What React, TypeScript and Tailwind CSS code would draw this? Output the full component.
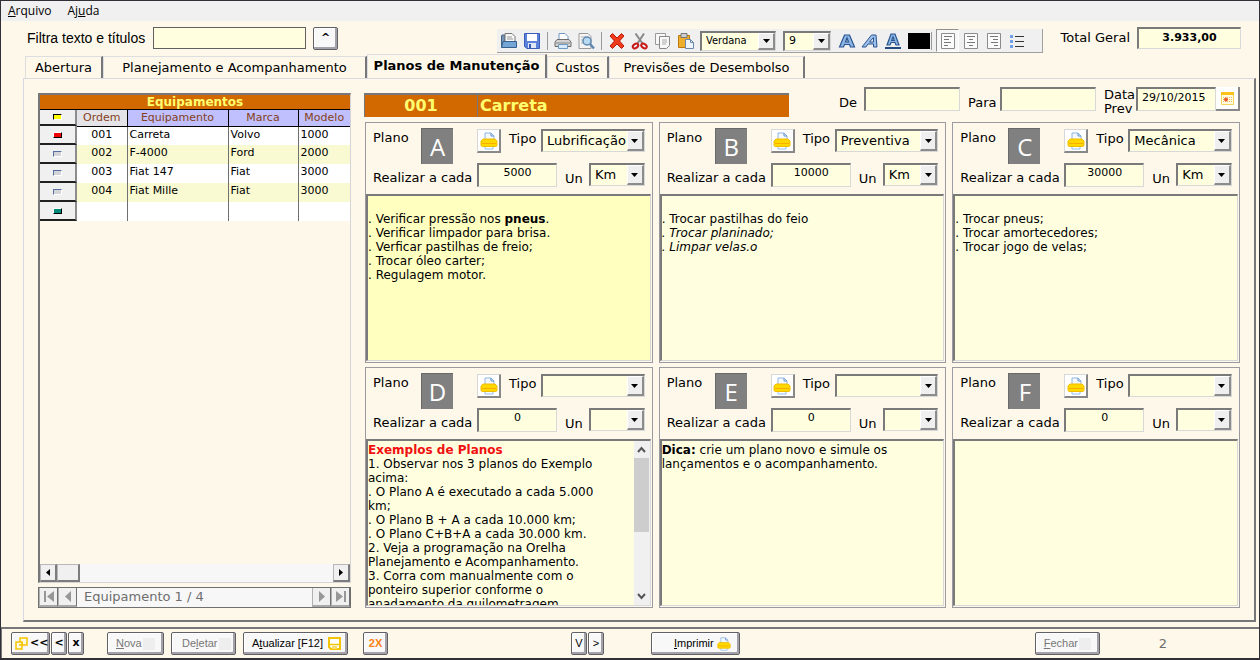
import { useState } from 'react';
import type { ReactNode } from 'react';

const SUNKEN = 'border-t-2 border-l-2 border-r border-b border-t-[#7a7a7a] border-l-[#7a7a7a] border-r-[#d8d8d8] border-b-[#d8d8d8] rounded-none';
const RAISED = 'border-t border-l border-r-2 border-b-2 border-t-[#b8b8b8] border-l-[#b8b8b8] border-r-[#7c7c7c] border-b-[#7c7c7c] rounded-none';
const COMMAND = 'h-[23px] shrink-0 flex items-center border border-[#606066] rounded-xs bg-[#f8f8f8] shadow-[inset_-2px_-2px_0_#a2a2a8,inset_1px_1px_0_#ffffff] text-[11px]';

const equipments = [
  { order: '001', name: 'Carreta', brand: 'Volvo', model: '1000' },
  { order: '002', name: 'F-4000', brand: 'Ford', model: '2000' },
  { order: '003', name: 'Fiat 147', brand: 'Fiat', model: '3000' },
  { order: '004', name: 'Fiat Mille', brand: 'Fiat', model: '3000' },
];

const tabs = [
  { label: 'Abertura', width: 'w-[78px]' },
  { label: 'Planejamento e Acompanhamento', width: 'w-[264px]' },
  { label: 'Planos de Manutenção', width: 'w-[180px]' },
  { label: 'Custos', width: 'w-[62px]' },
  { label: 'Previsões de Desembolso', width: 'w-[196px]' },
];

type Plan = {
  letter: string;
  type: string;
  every: string;
  unit: string;
  background: string;
  scroll?: boolean;
  body: ReactNode;
};

const plans: Plan[] = [
  {
    letter: 'A', type: 'Lubrificação', every: '5000', unit: 'Km', background: 'bg-[#ffffc0]',
    body: <><br />. Verificar pressão nos <b>pneus</b>.<br />. Verificar limpador para brisa.<br />. Verficar pastilhas de freio;<br />. Trocar óleo carter;<br />. Regulagem motor.</>,
  },
  {
    letter: 'B', type: 'Preventiva', every: '10000', unit: 'Km', background: 'bg-[#ffffe0]',
    body: <><br />. Trocar pastilhas do feio<br /><i>. Trocar planinado;<br />. Limpar velas.o</i></>,
  },
  {
    letter: 'C', type: 'Mecânica', every: '30000', unit: 'Km', background: 'bg-[#ffffe0]',
    body: <><br />. Trocar pneus;<br />. Trocar amortecedores;<br />. Trocar jogo de velas;</>,
  },
  {
    letter: 'D', type: '', every: '0', unit: '', background: 'bg-[#ffffe0]', scroll: true,
    body: <><b className="text-[#f01010]">Exemplos de Planos</b><br />1. Observar nos 3 planos do Exemplo<br />acima:<br />. O Plano A é executado a cada 5.000<br />km;<br />. O Plano B + A a cada 10.000 km;<br />. O Plano C+B+A a cada 30.000 km.<br />2. Veja a programação na Orelha<br />Planejamento e Acompanhamento.<br />3. Corra com manualmente com o<br />ponteiro superior conforme o<br />anadamento da quilometragem</>,
  },
  {
    letter: 'E', type: '', every: '0', unit: '', background: 'bg-[#ffffe0]',
    body: <><b>Dica:</b> crie um plano novo e simule os<br />lançamentos e o acompanhamento.</>,
  },
  { letter: 'F', type: '', every: '0', unit: '', background: 'bg-[#ffffe0]', body: null },
];

function Combo({ label, id, value, options, width, text }: { label?: string; id?: string; value: string; options: string[]; width: string; text: string }) {
  return (
    <div className={`${width} grid bg-[#ffffe0] ${SUNKEN}`}>
      <select
        id={id}
        aria-label={label}
        defaultValue={value}
        className={`col-start-1 row-start-1 w-full min-w-0 appearance-none bg-transparent pl-1 pr-[17px] outline-none ${text}`}
      >
        {options.map(option => <option key={option} value={option}>{option}</option>)}
      </select>
      <span className="col-start-1 row-start-1 justify-self-end w-[17px] flex items-center justify-center pointer-events-none bg-[#efefef] border-t border-l border-r-2 border-b-2 border-t-white border-l-white border-r-[#8c8c8c] border-b-[#8c8c8c]">
        <svg width="7" height="4" viewBox="0 0 7 4"><path d="M0 0h7L3.500 4z" fill="#000" /></svg>
      </span>
    </div>
  );
}

function YellowPrinter({ size }: { size: number }) {
  return (
    <svg width={size} height={size} viewBox="0 0 18 18">
      <path d="M5 8V1h6l3 3v4z" fill="#f4f9ff" stroke="#8fb4e0" />
      <path d="M11 1v3h3" fill="none" stroke="#5f92d0" />
      <path d="M5 13h8v4H5z" fill="#fff" stroke="#8fc0ee" />
      <path d="M3 7h12l2 2v4q0 1.500-1.500 1.500h-13Q1 14.500 1 13V9z" fill="#ffd800" stroke="#f0bc00" />
      <path d="M2 11.500h14" stroke="#f7ae00" />
    </svg>
  );
}

function YellowFloppy() {
  return (
    <svg width="13" height="13" viewBox="0 0 13 13">
      <path d="M1 1h11v11H3L1 10z" fill="#fff" stroke="#f5c400" strokeWidth="2" />
      <path d="M2 7.500h9" stroke="#f5c400" strokeWidth="1.500" />
      <path d="M4 9h5v3H4z" fill="#f7dc70" />
    </svg>
  );
}

function ToolIcon({ name }: { name: string }) {
  return (
    <svg width="18" height="18" viewBox="0 0 18 18" fill="none">
      {name === 'open' && (
        <>
          <path d="M1.500 15V4q0-1 1-1H5v12z" fill="#7795b7" stroke="#45627f" />
          <path d="M5 10V1.500h7l3 3V10z" fill="#f7f7f7" stroke="#777" />
          <path d="M7 5h5M7 7h6" stroke="#999" />
          <path d="M1.500 15.500L3 9.500h13.500v6z" fill="#74a5d6" stroke="#365f8c" />
        </>
      )}
      {name === 'save' && (
        <>
          <path d="M1.500 1.500h15v15H4l-2.500-2z" fill="#5a82da" stroke="#3b5fb8" />
          <path d="M4 2h10v7H4z" fill="#fff" />
          <path d="M5 11h8v5H5z" fill="#dfe6f4" />
          <path d="M6 12h2v4H6z" fill="#375ab0" />
        </>
      )}
      {name === 'print' && (
        <>
          <path d="M5 8V1.500h6l3 3V8z" fill="#fff" stroke="#6f98c0" />
          <path d="M3 7.500h12l2 2.500v4.500H1V10z" fill="#d2d2d2" stroke="#6e6e6e" />
          <path d="M2 11h14" stroke="#8a8a8a" />
          <path d="M4.500 12.500h9v4h-9z" fill="#d8ebfa" stroke="#6f98c0" />
        </>
      )}
      {name === 'preview' && (
        <>
          <path d="M2 1.500h9l3 3v12H2z" fill="#f4f4f4" stroke="#9a9a9a" />
          <path d="M4 5h5M4 8h3M4 11h3" stroke="#b0b0b0" />
          <circle cx="10" cy="9" r="4" fill="#b9daf3" stroke="#5f88b0" strokeWidth="1.500" />
          <path d="M13 12l4 4.500" stroke="#5f88b0" strokeWidth="2.500" />
        </>
      )}
      {name === 'delete' && <path d="M2 4l2.500-2.500L9 6l4.500-4.500L16 4l-4.500 5 4.500 5-2.500 2.500L9 12l-4.500 4.500L2 14l4.500-5z" fill="#f03a1c" stroke="#b81b08" />}
      {name === 'cut' && (
        <>
          <path d="M4.500 1.500l7 10M13 1.500l-6.500 10" stroke="#888" strokeWidth="2" />
          <ellipse cx="4.500" cy="14" rx="3" ry="2" transform="rotate(-35 4.500 14)" stroke="#c81818" strokeWidth="2" />
          <ellipse cx="13" cy="14" rx="3" ry="2" transform="rotate(35 13 14)" stroke="#c81818" strokeWidth="2" />
        </>
      )}
      {name === 'copy' && (
        <>
          <path d="M1.500 1.500h10v11h-10z" fill="#f8f8f8" stroke="#999" />
          <path d="M5.500 4.500h10v9l-3 3h-7z" fill="#f8f8f8" stroke="#888" />
          <path d="M8 8h5M8 10h5M8 12h4" stroke="#aaa" />
        </>
      )}
      {name === 'paste' && (
        <>
          <path d="M1.500 3.500h11v12h-11z" fill="#efae2b" stroke="#b87a10" />
          <path d="M4 1.500h6v4H4z" fill="#cfcfcf" stroke="#777" />
          <path d="M8.500 7.500h5l3 3v6h-8z" fill="#edf4fb" stroke="#6a88ab" />
          <path d="M13.500 7.500v3h3" stroke="#6a88ab" />
        </>
      )}
      {name === 'bold' && <path d="M1.500 15L6.500 3h5l5 12h-4l-1-2.500h-5l-1 2.500zM7.500 10h3L9 6z" fill="#8db6e4" stroke="#2a5590" strokeWidth="1.200" />}
      {name === 'italic' && <path d="M1 15L10.500 3H15l1 12h-3.500v-3H7l-2 3zM8.500 10h4V5.500z" fill="#9dc0ea" stroke="#2a5590" />}
      {name === 'underline' && (
        <>
          <path d="M3 13L7 2h4l4 11h-3l-1-2.500H7L6 13zM7.700 8.500h2.600L9 5z" fill="#8db6e4" stroke="#2a5590" strokeWidth="1.200" />
          <path d="M1 16h16" stroke="#24497e" strokeWidth="2" />
        </>
      )}
      {name === 'left' && <><path d="M2.500 1.500h13v15h-13z" fill="#fbfbfb" stroke="#8c8c8c" /><path d="M5 4.500h8M5 7.500h5M5 10.500h7M5 13.500h4" stroke="#777" /></>}
      {name === 'center' && <><path d="M2.500 1.500h13v15h-13z" fill="#fbfbfb" stroke="#8c8c8c" /><path d="M5 4.500h8M7 7.500h4M5 10.500h8M7 13.500h4" stroke="#777" /></>}
      {name === 'right' && <><path d="M2.500 1.500h13v15h-13z" fill="#fbfbfb" stroke="#8c8c8c" /><path d="M5 4.500h8M8 7.500h5M6 10.500h7M9 13.500h4" stroke="#777" /></>}
      {name === 'list' && <><path d="M2 3h3v3H2zM2 8h3v3H2zM2 13h3v3H2z" fill="#6f9fe8" /><path d="M7 4.500h9M7 9.500h9M7 14.500h9" stroke="#333" /></>}
    </svg>
  );
}

function ToolButton({ name, label, pressed }: { name: string; label: string; pressed?: boolean }) {
  return (
    <button
      type="button"
      aria-label={label}
      className={`w-[23px] h-[23px] flex items-center justify-center ${pressed ? 'border border-t-[#909090] border-l-[#909090] border-r-white border-b-white bg-[#f7f7f7]' : ''}`}
    >
      <ToolIcon name={name} />
    </button>
  );
}

function Divider() {
  return <div className="w-2 h-[18px] flex justify-center"><div className="w-px bg-[#9a9a9a]" /></div>;
}

function MenuBar() {
  return (
    <nav className="h-5 shrink-0 flex items-center gap-4 pl-[7px] bg-[#f0f0f0] font-['Open_Sans',sans-serif] text-[12px]">
      <button type="button"><u>A</u>rquivo</button>
      <button type="button">Aj<u>u</u>da</button>
    </nav>
  );
}

function TopBar() {
  return (
    <header className="h-[33px] shrink-0 flex items-start pt-1.5 pl-[26px] pr-[18px]">
      <label htmlFor="filter" className="w-[126px] leading-[22px] whitespace-nowrap font-['Liberation_Sans',sans-serif] text-[14px]">Filtra texto e títulos</label>
      <input id="filter" className="w-[153px] h-[22px] px-1 bg-[#ffffe0] border border-[#606060] text-[12px]" />
      <button type="button" className={`${COMMAND} ml-[7px] w-[25px] h-5 justify-center font-bold`}>^</button>

      <div className="ml-[159px] mt-0.5 h-6 shrink-0 flex items-center pr-[14px] bg-[#f0f0f0] border-r border-b border-[#a0a0a0]">
        <ToolButton name="open" label="Abrir" />
        <ToolButton name="save" label="Salvar" />
        <Divider />
        <ToolButton name="print" label="Imprimir texto" />
        <ToolButton name="preview" label="Visualizar" />
        <Divider />
        <ToolButton name="delete" label="Apagar" />
        <ToolButton name="cut" label="Recortar" />
        <ToolButton name="copy" label="Copiar" />
        <ToolButton name="paste" label="Colar" />
        <div className="flex items-center gap-[7px] pl-[3px] pr-1">
          <Combo label="Fonte" value="Verdana" options={['Verdana', 'Arial', 'Tahoma']} width="w-[76px] h-5" text="font-['DejaVu_Sans_Condensed','DejaVu_Sans',sans-serif] text-[11px]" />
          <Combo label="Tamanho" value="9" options={['8', '9', '10', '12']} width="w-[48px] h-5" text="text-[11px]" />
        </div>
        <ToolButton name="bold" label="Negrito" />
        <ToolButton name="italic" label="Itálico" />
        <ToolButton name="underline" label="Sublinhado" />
        <button type="button" aria-label="Cor do texto" className="w-[22px] h-4 ml-1 mr-px bg-black" />
        <div className="w-px h-[18px] mr-1 bg-[#9a9a9a]" />
        <ToolButton name="left" label="Alinhar à esquerda" pressed />
        <ToolButton name="center" label="Centralizar" />
        <ToolButton name="right" label="Alinhar à direita" />
        <ToolButton name="list" label="Marcadores" />
      </div>

      <label htmlFor="total" className="ml-auto mr-[7px] leading-[22px] whitespace-nowrap text-[13px]">Total Geral</label>
      <input id="total" readOnly defaultValue="3.933,00" className={`w-[104px] h-[22px] pb-0.5 bg-[#ffffe0] text-center font-bold text-[11px] ${SUNKEN}`} />
    </header>
  );
}

function Marker({ color }: { color: string }) {
  return (
    <div className="h-full flex items-center justify-center bg-[#f0f0f0] border-r-2 border-b-2 border-r-[#8c8c8c] border-b-[#202020]">
      <span className={`w-[9px] h-[6px] border ${color}`} />
    </div>
  );
}

function EquipmentGrid() {
  return (
    <section className="w-[313px] shrink-0 mt-1.5 flex flex-col gap-1">
      <div className="flex-1 min-h-0 flex flex-col justify-between border-t-2 border-l-2 border-t-[#77777a] border-l-[#77777a] border-r border-b border-r-[#d5d5d8] border-b-[#d5d5d8]">
        <table className="w-full table-fixed border-collapse text-[11px] leading-[14px]">
          <caption className="h-[15px] bg-[#d26900] text-[#ffff70] font-bold text-[12px] leading-[14px] border-b border-black">Equipamentos</caption>
          <colgroup>
            <col className="w-[37px]" />
            <col className="w-[50px]" />
            <col className="w-[101px]" />
            <col className="w-[70px]" />
            <col />
          </colgroup>
          <thead>
            <tr className="h-4 text-[#844020]">
              <th className="h-4 p-0"><Marker color="border-t-black border-l-black border-r-white border-b-white bg-[#ffff00]" /></th>
              <th className="p-0 font-normal bg-[#e4e4e8] border-r border-b border-black">Ordem</th>
              <th className="p-0 font-normal bg-[#c0c0ff] border-r border-b border-black">Equipamento</th>
              <th className="p-0 font-normal bg-[#c0c0ff] border-r border-b border-black">Marca</th>
              <th className="p-0 font-normal bg-[#c0c0ff] border-b border-black">Modelo</th>
            </tr>
          </thead>
          <tbody>
            {equipments.map((row, index) => (
              <tr key={row.order} className={`h-[19px] align-top ${index % 2 ? 'bg-[#fafad2]' : 'bg-white'}`}>
                <td className="h-[19px] p-0">
                  <Marker color={index === 0 ? 'bg-[#f00000] border-t-white border-l-white border-r-black border-b-black' : 'bg-[#d4d4d8] border-t-[#5870a0] border-l-[#5870a0] border-r-white border-b-white'} />
                </td>
                <td className="px-0 py-px text-center border-r border-[#707070]">{row.order}</td>
                <td className="px-0.5 py-px border-r border-[#707070]">{row.name}</td>
                <td className="px-0.5 py-px border-r border-[#707070]">{row.brand}</td>
                <td className="px-0.5 py-px">{row.model}</td>
              </tr>
            ))}
            <tr className="h-[19px] bg-white">
              <td className="h-[19px] p-0"><Marker color="bg-[#008878] border-t-white border-l-white border-r-black border-b-black" /></td>
              <td className="border-r border-[#707070]" />
              <td className="border-r border-[#707070]" />
              <td className="border-r border-[#707070]" />
              <td />
            </tr>
          </tbody>
        </table>
        <div className="h-[18px] flex bg-[#f7f7f7]">
          <button type="button" aria-label="Rolar para a esquerda" className={`w-[17px] flex items-center justify-center bg-[#f0f0f0] ${RAISED}`}>
            <svg width="4" height="7" viewBox="0 0 4 7"><path d="M4 0v7L0 3.500z" /></svg>
          </button>
          <div className={`w-[23px] bg-[#f0f0f0] ${RAISED}`} />
          <button type="button" aria-label="Rolar para a direita" className={`ml-auto w-[17px] flex items-center justify-center bg-[#f0f0f0] ${RAISED}`}>
            <svg width="4" height="7" viewBox="0 0 4 7"><path d="M0 0v7l4-3.500z" /></svg>
          </button>
        </div>
      </div>
      <div className="h-[21px] flex border border-[#707070] bg-[#f7f7f7] text-[#6e6e6e]">
        <NavButton label="Primeiro" path="M1 0h2v11H1zM11 0v11L4 5.500z" />
        <NavButton label="Anterior" path="M9 0v11L3 5.500z" />
        <span className="flex-1 pl-[7px] text-[13px] leading-[18px]">Equipamento 1 / 4</span>
        <NavButton label="Próximo" path="M3 0v11l6-5.500z" />
        <NavButton label="Último" path="M1 0v11l7-5.500zM9 0h2v11H9z" />
      </div>
    </section>
  );
}

function NavButton({ label, path }: { label: string; path: string }) {
  return (
    <button type="button" aria-label={label} className="w-[19px] flex items-center justify-center bg-[#f0f0f0] border-r border-l border-l-[#b0b0b0] border-r-[#707070] border-b-2 border-b-[#a8a8a8]">
      <svg width="12" height="11" viewBox="0 0 12 11"><path d={path} fill="#979797" /></svg>
    </button>
  );
}

function PlanCard({ plan }: { plan: Plan }) {
  const { letter } = plan;

  return (
    <article className="min-w-0 min-h-0 flex flex-col border border-[#9a9aa0]">
      <div className="h-[71px] shrink-0 flex pl-[7px] pr-[7px] pt-[5px] text-[13px]">
        <div className="w-[104px] shrink-0">
          <div className="flex">
            <span className="w-12 leading-5">Plano</span>
            <span className="w-8 h-9 flex items-center justify-center bg-[#808080] text-white font-['Open_Sans',sans-serif] text-[24px] leading-9 border-t border-l border-[#6a6a6a]">{letter}</span>
          </div>
          <label htmlFor={`every-${letter}`} className="block mt-1 leading-5 whitespace-nowrap">Realizar a cada</label>
        </div>
        <div className="flex-1 min-w-0 flex flex-col gap-2.5 pt-px">
          <div className="flex h-6">
            <button type="button" aria-label={`Imprimir plano ${letter}`} className="w-6 h-6 shrink-0 flex items-center justify-center bg-white border-t border-l border-r-2 border-b-2 border-t-[#d8d8d8] border-l-[#d8d8d8] border-r-[#888] border-b-[#888]">
              <YellowPrinter size={18} />
            </button>
            <label htmlFor={`type-${letter}`} className="w-10 pl-2 leading-5 shrink-0">Tipo</label>
            <Combo id={`type-${letter}`} value={plan.type} options={['', 'Lubrificação', 'Preventiva', 'Mecânica']} width="flex-1 min-w-0 h-[23px]" text="text-[13px]" />
          </div>
          <div className="flex h-6">
            <input id={`every-${letter}`} defaultValue={plan.every} className={`w-20 h-6 pb-1.5 shrink-0 bg-[#ffffe0] text-center text-[11px] ${SUNKEN}`} />
            <label htmlFor={`unit-${letter}`} className="w-8 pl-2 leading-6 pt-1 shrink-0">Un</label>
            <Combo id={`unit-${letter}`} value={plan.unit} options={['', 'Km', 'Hs']} width="flex-1 min-w-0 h-[23px]" text="text-[13px]" />
          </div>
        </div>
      </div>
      <div className={`flex-1 min-h-0 mr-px mb-px flex overflow-hidden ${plan.background} ${SUNKEN}`}>
        <div
          role="textbox"
          aria-multiline="true"
          aria-label={`Descrição do plano ${letter}`}
          contentEditable
          suppressContentEditableWarning
          spellCheck={false}
          className="flex-1 min-w-0 pt-0.5 text-[12px] leading-[14px] whitespace-nowrap outline-none"
        >
          {plan.body}
        </div>
        {plan.scroll && (
          <div className="w-4 shrink-0 flex flex-col items-center bg-[#f0f0f0]">
            <svg width="9" height="17" viewBox="0 0 9 17"><path d="M1 11l3.500-4L8 11" fill="none" stroke="#555" strokeWidth="2" /></svg>
            <div className="w-[15px] h-[74px] bg-[#cdcdcd]" />
            <svg className="mt-auto" width="9" height="17" viewBox="0 0 9 17"><path d="M1 6l3.500 4L8 6" fill="none" stroke="#555" strokeWidth="2" /></svg>
          </div>
        )}
      </div>
    </article>
  );
}

function PlansPanel() {
  const field = `h-6 bg-[#ffffe0] px-1 text-[11px] ${SUNKEN}`;

  return (
    <section className="flex-1 min-w-0 flex flex-col gap-[5px]">
      <div className="h-[30px] shrink-0 flex items-start text-[13px]">
        <div className="w-[425px] h-6 mt-1.5 shrink-0 flex bg-[#d26900] text-[#ffff70] font-bold text-[16px] leading-[22px] border-t-2 border-l border-[#77777a]">
          <span className="w-[112px] text-center">001</span>
          <span className="pl-0.5 border-l border-[#77777a]">Carreta</span>
        </div>
        <label htmlFor="from" className="ml-auto mr-[7px] mt-1.5">De</label>
        <input id="from" className={`w-24 ${field}`} />
        <label htmlFor="to" className="ml-2 w-8 mt-1.5">Para</label>
        <input id="to" className={`w-24 ${field}`} />
        <label htmlFor="date" className="ml-2 w-8 mt-px leading-[14px]">Data Prev</label>
        <input id="date" defaultValue="29/10/2015" className={`w-20 pb-1 ${field}`} />
        <button type="button" aria-label="Calendário" className="w-6 h-6 flex items-center justify-center bg-white border-r-2 border-b-2 border-[#888]">
          <svg width="13" height="13" viewBox="0 0 13 13">
            <path d="M.5.500h12v12H.5z" fill="#fffbe0" stroke="#f6d75a" />
            <path d="M0 0h13v3H0z" fill="#fbc21a" />
            <path d="M2 5.500h9M2 7.500h9M2 9.500h9" stroke="#eebf60" strokeDasharray="1 1" />
            <circle cx="5" cy="7.500" r="2" fill="#ee5a30" />
          </svg>
        </button>
      </div>
      <div className="flex-1 min-h-0 ml-px grid grid-cols-3 grid-rows-2 gap-x-1.5 gap-y-1">
        {plans.map(plan => <PlanCard key={plan.letter} plan={plan} />)}
      </div>
    </section>
  );
}

function Footer() {
  const ghost = <span className="w-3 h-3 ml-auto bg-[#eeeeee]" />;

  return (
    <footer className="h-[31px] mt-[5px] shrink-0 flex items-center pl-[9px] pr-[92px] border-t-2 border-l border-[#77777a] font-['Liberation_Sans',sans-serif]">
      <div className="flex gap-px font-['DejaVu_Sans',sans-serif] font-bold">
        <button type="button" className={`${COMMAND} w-[39px] pl-[3px] gap-0.5`}>
          <svg width="13" height="13" viewBox="0 0 13 13" fill="#fffbe0" stroke="#f5c400" strokeWidth="1.500">
            <path d="M5 1h7v7H5z" />
            <path d="M1 5h6v7H1z" />
            <path d="M4 8h3V5" fill="none" />
          </svg>
          &lt;&lt;
        </button>
        <button type="button" className={`${COMMAND} w-4 justify-center`}>&lt;</button>
        <button type="button" className={`${COMMAND} w-4 justify-center`}>x</button>
      </div>
      <button type="button" disabled className={`${COMMAND} ml-[23px] w-[57px] px-2 text-[#777]`}><span><u>N</u>ova</span>{ghost}</button>
      <button type="button" disabled className={`${COMMAND} ml-[7px] w-[65px] pl-2.5 pr-1 text-[#777]`}><span>De<u>l</u>etar</span>{ghost}</button>
      <button type="button" className={`${COMMAND} ml-[7px] w-[105px] pl-2 pr-1.5`}><span className="whitespace-nowrap">A<u>t</u>ualizar [F12]</span><span className="ml-auto"><YellowFloppy /></span></button>
      <button type="button" className={`${COMMAND} ml-[15px] w-[25px] justify-center font-bold text-[#ff8010]`}>2X</button>
      <div className="flex gap-px ml-[183px]">
        <button type="button" className={`${COMMAND} w-4 justify-center`}>V</button>
        <button type="button" className={`${COMMAND} w-4 justify-center`}>&gt;</button>
      </div>
      <button type="button" className={`${COMMAND} ml-[47px] w-[89px] pl-[22px] pr-2`}><span><u>I</u>mprimir</span><span className="ml-auto"><YellowPrinter size={14} /></span></button>
      <button type="button" disabled className={`${COMMAND} ml-auto w-[65px] px-2 text-[#777]`}><span><u>F</u>echar</span>{ghost}</button>
      <span className="ml-[59px] font-['DejaVu_Sans',sans-serif] text-[13px] text-[#6e6e6e]">2</span>
    </footer>
  );
}

export default function App() {
  const [active, setActive] = useState('Planos de Manutenção');

  return (
    <div className="h-screen flex flex-col overflow-hidden border-t border-l border-r border-b-2 border-[#303036] bg-[#fef8ea] text-black font-['DejaVu_Sans',sans-serif]">
      <MenuBar />
      <TopBar />
      <div className="h-6 shrink-0 flex items-end pl-6 text-[13px]" role="tablist">
        {tabs.map(tab => (
          <button
            key={tab.label}
            type="button"
            role="tab"
            aria-selected={tab.label === active}
            onClick={() => setActive(tab.label)}
            className={`${tab.width} shrink-0 whitespace-nowrap text-center border-t border-l border-t-[#dedee2] border-l-[#dedee2] border-r-2 border-r-[#77777a] ${tab.label === active ? 'h-6 font-bold pb-0.5' : 'h-[22px]'}`}
          >
            {tab.label}
          </button>
        ))}
      </div>
      <main className="flex-1 min-h-0 ml-[22px] mr-[3px] flex gap-[13px] pt-2 pb-3 pl-[14px] pr-[14px] border-t border-l border-t-[#d8d8de] border-l-[#d8d8de] border-r-2 border-b-2 border-r-[#77777a] border-b-[#77777a]">
        <EquipmentGrid />
        <PlansPanel />
      </main>
      <Footer />
    </div>
  );
}
